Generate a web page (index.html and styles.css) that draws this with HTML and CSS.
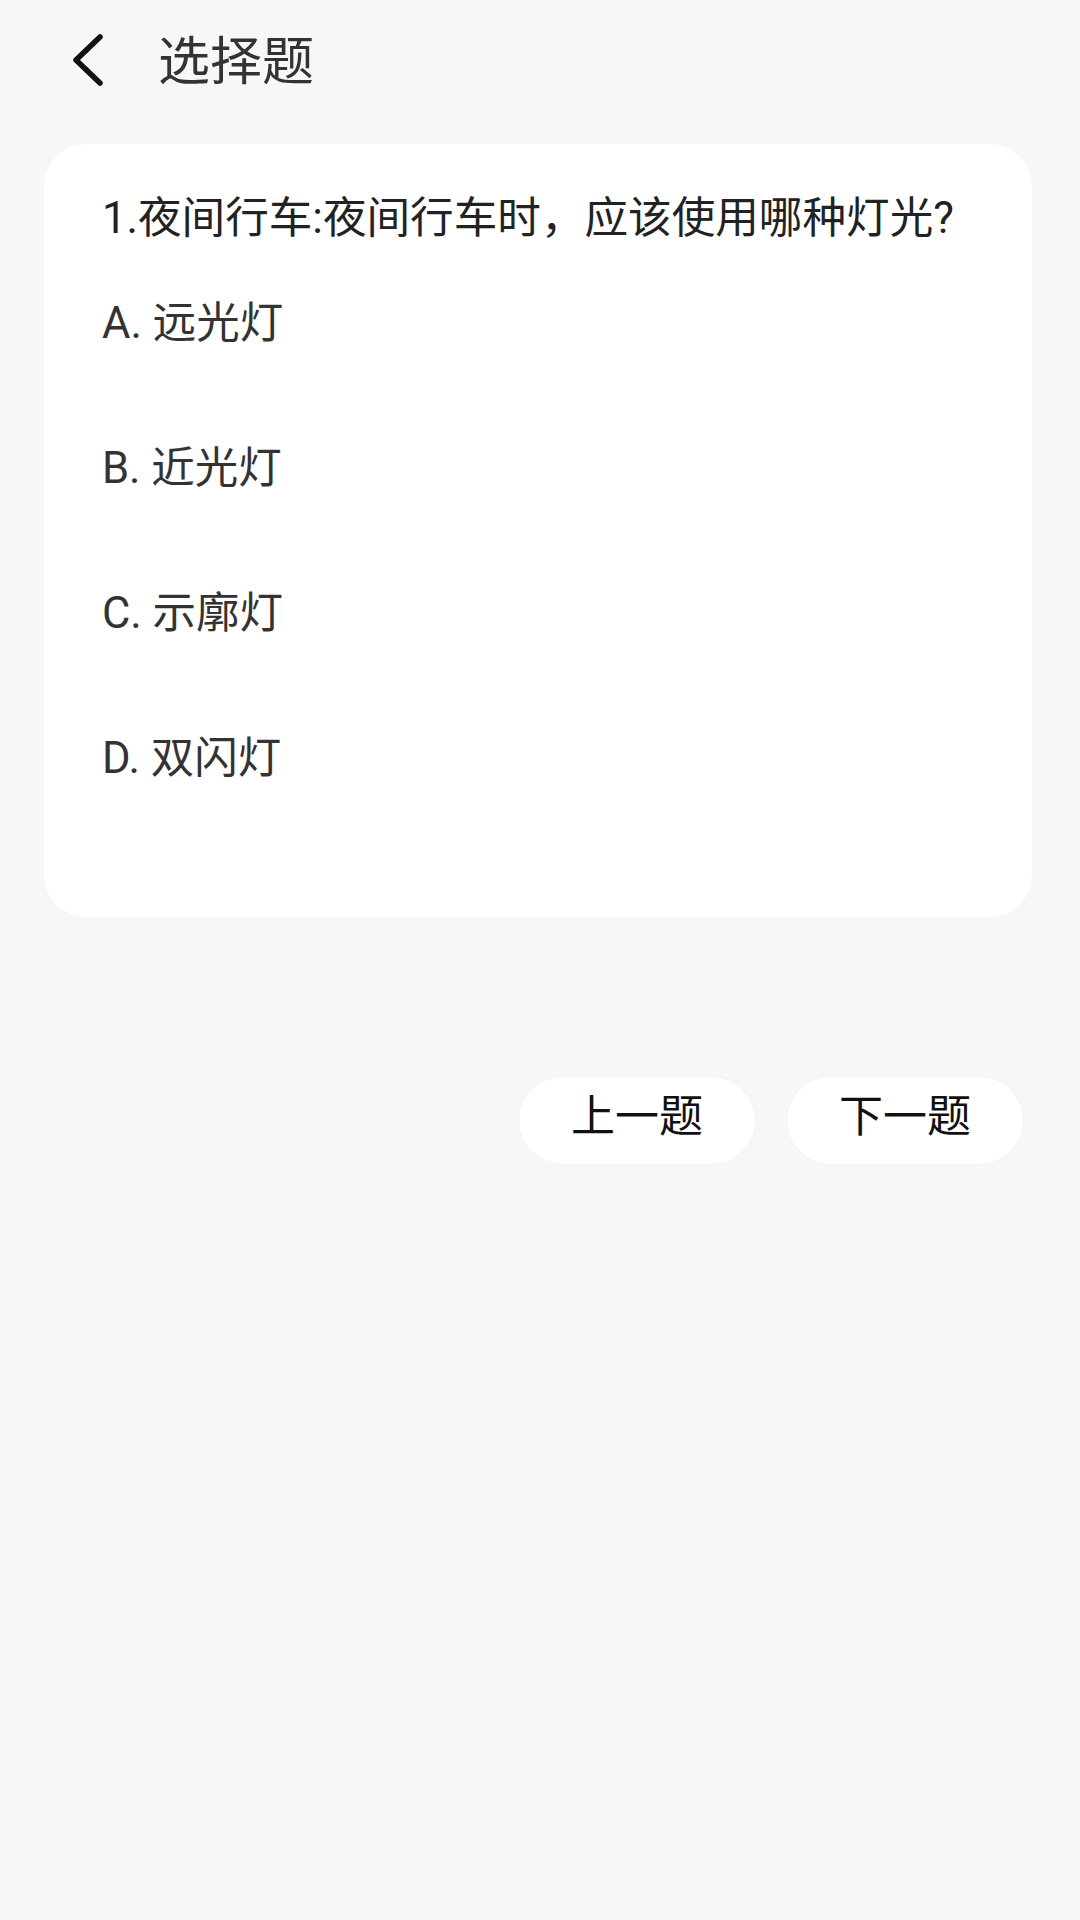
FILE: index.html
```html
<!DOCTYPE html>
<html lang="zh-CN">
<head>
    <meta charset="UTF-8">
    <title>选择题</title>
    <link rel="stylesheet" href="styles.css">
</head>
<body>

<header class="top-bar">
    <a class="back-btn" href="#">
        <svg width="40" height="56" viewBox="0 0 40 56">
            <polyline points="30,5 6,28 30,51" fill="none" stroke="#111" stroke-width="5.5" stroke-linecap="round" stroke-linejoin="round"/>
        </svg>
    </a>
    <h1 class="page-title">选择题</h1>
</header>

<div class="quiz-card">
    <p class="question">1.夜间行车:夜间行车时，应该使用哪种灯光?</p>
    <div class="option">A. 远光灯</div>
    <div class="option">B. 近光灯</div>
    <div class="option">C. 示廓灯</div>
    <div class="option">D. 双闪灯</div>
</div>

<div class="nav-buttons">
    <button class="nav-btn">上一题</button>
    <button class="nav-btn">下一题</button>
</div>

</body>
</html>
```

FILE: styles.css
```css
:root {
    --page-bg: #f7f7f7;
    --card-bg: #ffffff;
    --text-main: #222222;
    --text-sub: #333333;
}

body {
    margin: 0;
    background: var(--page-bg);
    font-family: "Roboto", "Noto Sans CJK SC", sans-serif;
    color: var(--text-main);
    min-height: 1920px;
}

/* шапка */
.top-bar {
    height: 116px;
    display: flex;
    align-items: center;
    padding-left: 70px;
}

.back-btn { display: flex; align-items: center; margin-top: 4px; }

.page-title {
    margin: 0 0 0 48px;
    font-family: "Noto Sans CJK SC", sans-serif;
    font-size: 52px;
    font-weight: normal;
    color: #333;
    line-height: 1;
}

/* карточка вопроса */
.quiz-card {
    background: var(--card-bg);
    margin: 28px 48px 0 44px;
    border-radius: 42px;
    padding: 47px 40px 90px 58px;
}

.question {
    margin: 0;
    font-size: 43.6px;
    line-height: 56px;
    color: var(--text-main);
    white-space: nowrap;
}

.option {
    height: 145px;
    display: flex;
    align-items: center;
    font-size: 43.5px;
    color: var(--text-sub);
}

/* кнопки навигации */
.nav-buttons {
    display: flex;
    justify-content: flex-end;
    gap: 32px;
    margin: 160px 57px 0 0;
}

.nav-btn {
    width: 236px;
    height: 87px;
    border: none;
    border-radius: 44px;
    background: #fff;
    box-shadow: 0 0 2px rgba(0, 0, 0, 0.06);
    font-family: "Noto Sans CJK SC", sans-serif;
    font-size: 44px;
    line-height: 1;
    color: #111;
    padding: 0 0 16px;
}
```
